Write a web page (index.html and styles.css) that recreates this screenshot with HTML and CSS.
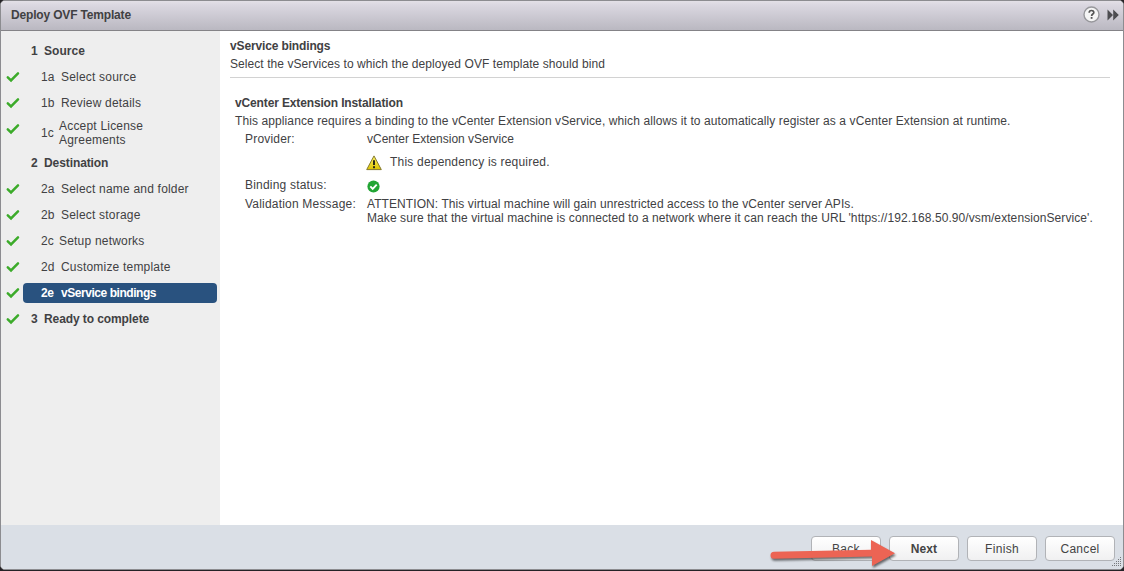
FILE: index.html
```html
<!DOCTYPE html>
<html lang="en">
<head>
<meta charset="utf-8">
<title>Deploy OVF Template</title>
<link rel="stylesheet" href="styles.css">
</head>
<body>
<svg class="defs" aria-hidden="true">
  <symbol id="check" viewBox="0 0 14 12"><path d="M1.8 6.4 L5 9.5 L12 2.4" fill="none" stroke="#3cab2a" stroke-width="2.5" stroke-linecap="round"/></symbol>
</svg>
<div class="dialog">
  <header class="titlebar">
    <h1 class="title">Deploy OVF Template</h1>
    <svg class="help" viewBox="0 0 17 17"><circle cx="8.5" cy="8.5" r="7.5" fill="#f5f5f5" stroke="#98989c" stroke-width="1.4"/><path d="M6.2 6.7 C6.2 3.8 10.8 3.8 10.8 6.5 C10.8 8.1 8.6 8 8.6 10" fill="none" stroke="#555" stroke-width="1.7"/><rect x="7.7" y="11" width="1.8" height="1.8" fill="#555"/></svg>
    <svg class="expand" viewBox="0 0 12 12"><path d="M.5 .6 L6 6 L.5 11.4Z M6.2 .6 L11.8 6 L6.2 11.4Z" fill="#4c4c50"/></svg>
  </header>
  <div class="body">
    <nav class="steps">
      <div class="step group"><span class="mark"></span><span class="item"><span class="num">1</span><span class="source">Source</span></span></div>
      <div class="step"><svg class="mark"><use href="#check"/></svg><span class="item"><span class="num">1a</span><span>Select source</span></span></div>
      <div class="step"><svg class="mark"><use href="#check"/></svg><span class="item"><span class="num">1b</span><span>Review details</span></span></div>
      <div class="step tall"><svg class="mark"><use href="#check"/></svg><span class="item"><span class="num narrow">1c</span><span>Accept License<br>Agreements</span></span></div>
      <div class="step group"><span class="mark"></span><span class="item"><span class="num">2</span><span>Destination</span></span></div>
      <div class="step"><svg class="mark"><use href="#check"/></svg><span class="item"><span class="num">2a</span><span>Select name and folder</span></span></div>
      <div class="step"><svg class="mark"><use href="#check"/></svg><span class="item"><span class="num">2b</span><span>Select storage</span></span></div>
      <div class="step"><svg class="mark"><use href="#check"/></svg><span class="item"><span class="num narrow">2c</span><span>Setup networks</span></span></div>
      <div class="step"><svg class="mark"><use href="#check"/></svg><span class="item"><span class="num">2d</span><span>Customize template</span></span></div>
      <div class="step current"><svg class="mark"><use href="#check"/></svg><span class="item"><span class="num">2e</span><span>vService bindings</span></span></div>
      <div class="step group"><svg class="mark"><use href="#check"/></svg><span class="item"><span class="num">3</span><span>Ready to complete</span></span></div>
    </nav>
    <main class="content">
      <div class="intro">
        <h2 class="heading">vService bindings</h2>
        <p class="line">Select the vServices to which the deployed OVF template should bind</p>
      </div>
      <section class="binding">
        <h3 class="heading">vCenter Extension Installation</h3>
        <p class="line desc">This appliance requires a binding to the vCenter Extension vService, which allows it to automatically register as a vCenter Extension at runtime.</p>
        <dl class="props">
          <dt>Provider:</dt><dd class="provider">vCenter Extension vService</dd>
          <dt></dt>
          <dd class="required"><svg class="warn" viewBox="0 0 16 16"><defs><linearGradient id="y" x2="0" y2="1"><stop stop-color="#fff56a"/><stop offset="1" stop-color="#dcc200"/></linearGradient></defs><path d="M8 .9 L15.3 14.6 H.7Z" fill="url(#y)" stroke="#857a2c" stroke-linejoin="round"/><path d="M8 5.2 V10" stroke="#292918" stroke-width="2"/><rect x="7" y="11.2" width="2" height="2" fill="#292918"/></svg><span>This dependency is required.</span></dd>
          <dt>Binding status:</dt>
          <dd class="status"><svg class="ok" viewBox="0 0 13 13"><circle cx="6.5" cy="6.5" r="6.1" fill="#22a534"/><path d="M3.3 6.3 L5.7 8.8 L9.7 4.6" fill="none" stroke="#fff" stroke-width="1.9"/></svg></dd>
          <dt>Validation Message:</dt><dd class="message">ATTENTION: This virtual machine will gain unrestricted access to the vCenter server APIs.<br>Make sure that the virtual machine is connected to a network where it can reach the URL 'https://192.168.50.90/vsm/extensionService'.</dd>
        </dl>
      </section>
    </main>
  </div>
  <footer class="actions">
    <button class="btn">Back</button>
    <button class="btn primary">Next</button>
    <button class="btn">Finish</button>
    <button class="btn">Cancel</button>
    <svg class="grip" viewBox="0 0 10 10"><path d="M8 0h1v1h-1zM6 2h1v1h-1zM8 2h1v1h-1zM4 4h1v1h-1zM6 4h1v1h-1zM8 4h1v1h-1zM2 6h1v1h-1zM4 6h1v1h-1zM6 6h1v1h-1zM8 6h1v1h-1zM0 8h1v1h-1zM2 8h1v1h-1zM4 8h1v1h-1zM6 8h1v1h-1zM8 8h1v1h-1z" fill="#77797d"/></svg>
    <svg class="arrow" viewBox="0 0 130 32"><path d="M4 11.8 L101 9.7 V0 L125 13.2 L102 26 V16.5 L4 18.8 A3.5 3.5 0 0 1 4 11.8Z" fill="#ec6454"/></svg>
  </footer>
</div>
</body>
</html>
```
FILE: styles.css
```css
* { box-sizing: border-box; }
body {
  margin: 0;
  height: 571px;
  overflow: hidden;
  background: #242226;
  font: 12px/14px "Liberation Sans", Arial, sans-serif;
  letter-spacing: 0.2px;
  color: #414143;
}
h1, h2, h3, p, dl, dd { margin: 0; font-size: 12px; }
.defs { position: absolute; width: 0; height: 0; }
.dialog {
  display: flex;
  flex-direction: column;
  height: 570px;
  border: 1px solid #8c8c90;
  border-radius: 5px;
  overflow: hidden;
  background: #fff;
}
.titlebar {
  display: flex;
  align-items: center;
  height: 30px;
  padding: 0 4px 2px 10px;
  border-bottom: 1px solid #848387;
  background: linear-gradient(#e3e0e7, #dad7e0 15%, #bab8c1);
}
.title { flex: 1; letter-spacing: -0.17px; }
.help { width: 17px; height: 17px; margin-right: 7px; }
.expand { width: 12px; height: 12px; }
.body { display: flex; flex: 1; }
.steps { width: 219px; padding-top: 7px; background: #eee; }
.step { display: flex; align-items: center; height: 26px; }
.mark { width: 14px; height: 12px; margin: 0 3px 0 5px; flex: none; }
.item {
  display: flex;
  align-items: center;
  width: 194px;
  height: 20px;
  padding-left: 18px;
  border-radius: 4px;
}
.num { width: 20px; flex: none; }
.narrow { width: 18px; }
.group { font-weight: bold; letter-spacing: -0.09px; }
.source { letter-spacing: 0.05px; }
.group .item { padding-left: 8px; }
.group .num { width: 13px; }
.tall { height: 34px; align-items: flex-start; padding-top: 7px; }
.tall .item { height: 28px; margin-top: -4px; }
.current .item { background: #29527f; color: #fff; font-weight: bold; letter-spacing: -0.45px; }
.content { flex: 1; padding: 8px 13px 0 10px; }
.intro { height: 39px; border-bottom: 1px solid #d2d2d2; }
.heading { line-height: 14px; letter-spacing: -0.14px; }
.intro .line, .desc { margin-top: 4px; }
.intro .line { letter-spacing: 0.07px; }
.desc { letter-spacing: 0.1px; white-space: nowrap; }
.binding { padding: 18px 0 0 5px; }
.props {
  display: grid;
  grid-template-columns: 122px 1fr;
  grid-template-rows: 23px 23px 19px auto;
  margin: 4px 0 0 10px;
  white-space: nowrap;
}
.provider { letter-spacing: -0.02px; }
.message { letter-spacing: 0.08px; }
.required { display: flex; align-items: flex-start; gap: 8px; }
.warn { width: 16px; height: 16px; margin-left: -1px; }
.ok { display: block; width: 13px; height: 13px; margin-top: 2px; }
.actions {
  position: relative;
  display: flex;
  gap: 8px;
  justify-content: flex-end;
  height: 44px;
  padding: 11px 8px 0;
  background: #dadfe6;
}
.btn {
  width: 70px;
  height: 25px;
  padding: 0;
  border: 1px solid #b1b3b7;
  border-radius: 4px;
  background: linear-gradient(#fff, #f0f0f1);
  font: 12px "Liberation Sans", Arial, sans-serif;
  letter-spacing: 0.3px;
  color: #444;
}
.primary { font-weight: bold; letter-spacing: 0.1px; }
.grip { position: absolute; right: 1px; bottom: 2px; width: 10px; height: 10px; }
.arrow {
  position: absolute;
  left: 769px;
  top: 15px;
  width: 130px;
  height: 32px;
  filter: drop-shadow(1px 2px 1px rgba(0, 0, 0, 0.55));
}
```
